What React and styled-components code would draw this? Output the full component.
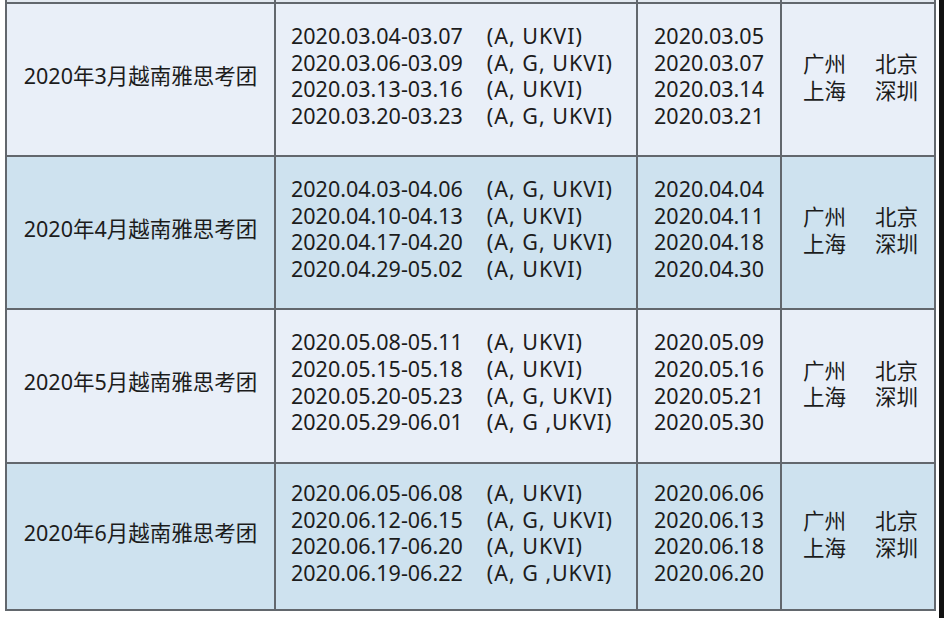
import styled, { createGlobalStyle } from 'styled-components';

const GlobalStyle = createGlobalStyle`
  html, body {
    margin: 0;
    padding: 0;
    background: #fff;
  }
  body {
    font-family: 'Noto Sans', 'Noto Sans CJK SC', sans-serif;
    color: #1c1c1c;
  }
`;

const Page = styled.div`
  display: flex;
  gap: 3px;
  height: 618px;
  padding-left: 5px;
  box-sizing: border-box;
  overflow: hidden;
`;

const Sheet = styled.div`
  display: grid;
  grid-template-columns: 269px 362px 144px 154px;
  grid-template-rows: 4px 153px 153px 154px 147px;
  align-self: flex-start;
  border-left: 2px solid #62676d;
`;

const Cell = styled.div`
  box-sizing: border-box;
  border-right: 2px solid #62676d;
  border-bottom: 2px solid #62676d;
  background: ${({ $tone }) =>
    $tone === 'blue' ? '#cee2ef' : $tone === 'edge' ? '#e4eaf1' : '#e9eff8'};
  display: flex;
  align-items: center;
  justify-content: center;
  padding-bottom: ${({ $lift }) => ($lift ? '6.5px' : '0')};
  font-size: 21.5px;
  line-height: 26.67px;
  white-space: pre;
`;

const Sessions = styled.div`
  display: grid;
  grid-template-columns: auto auto;
  column-gap: 24px;
  margin-right: 8px;
`;

const Tag = styled.span`
  letter-spacing: 1px;
`;

const Dates = styled.div`
  display: flex;
  flex-direction: column;
  align-items: center;
`;

const Cities = styled.div`
  display: grid;
  grid-template-columns: auto auto;
  column-gap: 29px;
  margin-left: 5px;
  margin-top: 3px;
`;

const EdgeBar = styled.div`
  width: 5px;
  height: 100%;
  background: #111;
  flex-shrink: 0;
`;

const groups = [
  {
    month: 3,
    sessions: [
      ['2020.03.04-03.07', '(A, UKVI)'],
      ['2020.03.06-03.09', '(A, G, UKVI)'],
      ['2020.03.13-03.16', '(A, UKVI)'],
      ['2020.03.20-03.23', '(A, G, UKVI)'],
    ],
    dates: ['2020.03.05', '2020.03.07', '2020.03.14', '2020.03.21'],
  },
  {
    month: 4,
    sessions: [
      ['2020.04.03-04.06', '(A, G, UKVI)'],
      ['2020.04.10-04.13', '(A, UKVI)'],
      ['2020.04.17-04.20', '(A, G, UKVI)'],
      ['2020.04.29-05.02', '(A, UKVI)'],
    ],
    dates: ['2020.04.04', '2020.04.11', '2020.04.18', '2020.04.30'],
  },
  {
    month: 5,
    sessions: [
      ['2020.05.08-05.11', '(A, UKVI)'],
      ['2020.05.15-05.18', '(A, UKVI)'],
      ['2020.05.20-05.23', '(A, G, UKVI)'],
      ['2020.05.29-06.01', '(A, G ,UKVI)'],
    ],
    dates: ['2020.05.09', '2020.05.16', '2020.05.21', '2020.05.30'],
  },
  {
    month: 6,
    sessions: [
      ['2020.06.05-06.08', '(A, UKVI)'],
      ['2020.06.12-06.15', '(A, G, UKVI)'],
      ['2020.06.17-06.20', '(A, UKVI)'],
      ['2020.06.19-06.22', '(A, G ,UKVI)'],
    ],
    dates: ['2020.06.06', '2020.06.13', '2020.06.18', '2020.06.20'],
  },
];

const cities = ['广州', '北京', '上海', '深圳'];

export default function App() {
  return (
    <>
      <GlobalStyle />
      <Page>
        <Sheet>
          {[0, 1, 2, 3].map((i) => (
            <Cell key={`edge-${i}`} $tone="edge" />
          ))}
          {groups.map((g, idx) => {
            const tone = idx % 2 ? 'blue' : 'light';
            return [
              <Cell key={`m-${g.month}`} $tone={tone} $lift>
                {`2020年${g.month}月越南雅思考团`}
              </Cell>,
              <Cell key={`s-${g.month}`} $tone={tone} $lift>
                <Sessions>
                  {g.sessions.map(([range, tag]) => [
                    <span key={range}>{range}</span>,
                    <Tag key={`${range}-t`}>{tag}</Tag>,
                  ])}
                </Sessions>
              </Cell>,
              <Cell key={`d-${g.month}`} $tone={tone} $lift>
                <Dates>
                  {g.dates.map((d) => (
                    <span key={d}>{d}</span>
                  ))}
                </Dates>
              </Cell>,
              <Cell key={`c-${g.month}`} $tone={tone} $lift>
                <Cities>
                  {cities.map((c) => (
                    <span key={c}>{c}</span>
                  ))}
                </Cities>
              </Cell>,
            ];
          })}
        </Sheet>
        <EdgeBar />
      </Page>
    </>
  );
}
